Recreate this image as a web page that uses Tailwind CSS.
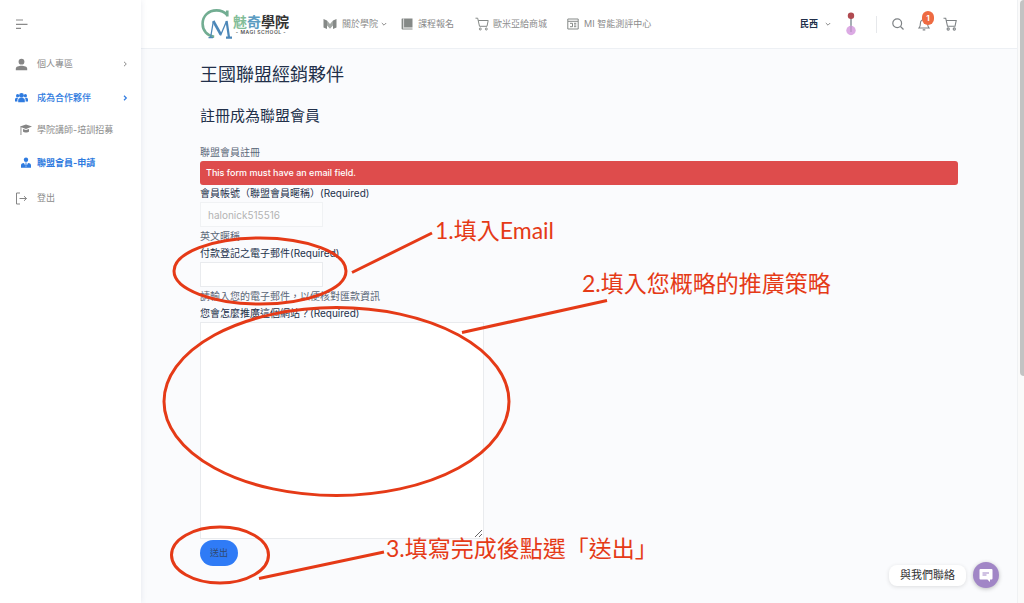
<!DOCTYPE html>
<html lang="zh-Hant">
<head>
<meta charset="utf-8">
<title>王國聯盟經銷夥伴</title>
<script src="https://cdn.jsdelivr.net/npm/@tailwindcss/browser@4"></script>
</head>
<body class="relative flex min-h-screen overflow-hidden bg-[#fafbfd] font-[Inter,'Noto_Sans_CJK_TC',sans-serif] text-[10px] text-[#5a6778]">

<!-- Sidebar -->
<aside class="z-10 w-[141px] shrink-0 bg-white shadow-[0_0_6px_rgba(40,60,110,0.10)]">
  <button type="button" aria-label="選單" class="mt-[17px] ml-[15px] block">
    <svg class="size-[14px]" viewBox="0 0 14 14" fill="none" stroke="#8a8a8a" stroke-width="1.2"><path d="M1 3h7M1 7.3h11.5M1 11.3h5"/></svg>
  </button>
  <nav class="mt-[16px] text-[9px] leading-[14px] text-[#8b8b8b]">
    <a href="#" class="flex h-[34px] items-center pr-[13px] pl-[15px]">
      <svg class="mr-[9px] size-[13px]" viewBox="0 0 13 13" fill="#858585"><circle cx="6.5" cy="3.7" r="2.9"/><path d="M.8 12.3v-1.6c0-2 3-2.9 5.7-2.9s5.7.9 5.7 2.9v1.6z"/></svg>
      <span class="flex-1">個人專區</span>
      <svg class="size-[6px]" viewBox="0 0 6 6" fill="none" stroke="#8b8b8b"><path d="M2 .8 4.3 3 2 5.2"/></svg>
    </a>
    <a href="#" class="flex h-[33px] items-center pr-[13px] pl-[15px] font-medium text-[#2f7be0]">
      <svg class="mr-[9px] h-[13px] w-[13px]" viewBox="0 0 13 13" fill="#2f7be0"><circle cx="6.5" cy="4.4" r="2.4"/><circle cx="2.6" cy="4.7" r="1.6"/><circle cx="10.4" cy="4.7" r="1.6"/><path d="M3.2 11.2V9.200c0-1.400 1-2.100 2-2.100h2.600c1 0 2 .7 2 2.100v2zM0 10.600V8.500C0 7.300.8 6.700 1.700 6.700h1.600c-.6.600-.9 1.300-.9 2.200v1.700zM13 10.600V8.500c0-1.200-.8-1.800-1.700-1.800H9.700c.6.600.9 1.300.9 2.200v1.700z"/></svg>
      <span class="flex-1">成為合作夥伴</span>
      <svg class="size-[6px]" viewBox="0 0 6 6" fill="none" stroke="#2f7be0" stroke-width="1.2"><path d="M2 .8 4.3 3 2 5.2"/></svg>
    </a>
    <a href="#" class="flex h-[32px] items-center pl-[20px]">
      <svg class="mr-[5px] h-[12px] w-[12px]" viewBox="0 0 12 12" fill="#858585"><path d="M0 2.6 6 .4l6 2.200L6 5 1.400 3.300V11H.5V2.900z"/><path d="M3 4.900 6 6.100l3-1.200v2.500C8 8.900 4 8.900 3 7.400z"/></svg>
      <span class="whitespace-nowrap">學院講師-培訓招募</span>
    </a>
    <a href="#" class="flex h-[34px] items-center pl-[20px] font-bold text-[#2f7be0]">
      <svg class="mr-[5px] h-[12px] w-[12px]" viewBox="0 0 12 12" fill="#2f7be0"><circle cx="6" cy="2.7" r="2.2"/><path d="M1 10.800V8.300c0-1.600 1.500-2.400 3-2.400l2 4.300 2-4.300c1.500 0 3 .8 3 2.400v2.500z"/><path d="M5.300 5.600h1.400l-.3 1.100.5 2L6 10l-.9-1.300.5-2z"/></svg>
      <span class="whitespace-nowrap">聯盟會員-申請</span>
    </a>
    <a href="#" class="flex h-[36px] items-center pl-[15px]">
      <svg class="mr-[9px] size-[13px]" viewBox="0 0 13 13" fill="none" stroke="#858585"><path d="M5 1H1.500v11H5M4.500 6.500h7M9 4.200l2.500 2.300L9 8.800"/></svg>
      <span>登出</span>
    </a>
  </nav>
</aside>

<div class="flex min-w-0 flex-1 flex-col">
  <!-- Top bar -->
  <header class="flex h-[49px] items-center border-b border-[#edf0f4] bg-white px-[59px] text-[9px] text-[#8b8b8b]">
    <a href="#" class="flex items-center" aria-label="魅奇學院">
      <svg class="h-[32px] w-[32px]" viewBox="0 0 32 32" fill="none"><path d="M27.300 8.500V2.500M27 7C24.200 3.700 20.500 2.400 16.500 2.400 8.500 2.400 2.600 8 2.600 15.800c0 7 4.900 12.300 11.600 12.900" stroke="#72ad92" stroke-width="2.600"/><path d="M8.500 29.600h4.500M10.600 29.500 13.300 13.500" stroke="#4c87b8" stroke-width="1.300"/><path d="M13.300 13 20.800 26.500" stroke="#4c87b8" stroke-width="2.600"/><path d="M20.500 27.500 26.600 13" stroke="#4c87b8" stroke-width="1.300"/><path d="M26.600 13 29 29.500M26 29.600h6" stroke="#4c87b8" stroke-width="2.200"/></svg>
      <span class="ml-[1px] flex flex-col items-center">
        <span class="text-[14px] leading-[17px] font-bold text-[#333]"><span class="text-[#83bd98]">魅</span><span class="text-[#5c9cc2]">奇</span>學院</span>
        <span class="text-[5px] leading-[5px] font-semibold tracking-widest text-[#555]">- MAGI SCHOOL -</span>
      </span>
    </a>
    <nav class="ml-[34px] flex items-center whitespace-nowrap">
      <a href="#" class="flex items-center">
        <svg class="mr-[5px] h-[12px] w-[14px]" viewBox="0 0 14 12"><path d="M.5 1 4 2.500V11L.5 9.500zM13.500 1 10 2.500V11l3.500-1.500z" fill="#858987"/><path d="M4 2.500 7 6l3-3.500v5L7 10.800 4 7.500z" fill="#a3a8a5"/></svg>
        關於學院
        <svg class="ml-[3px] size-[6px]" viewBox="0 0 6 6" fill="none" stroke="#8b8b8b"><path d="M.8 2 3 4.200 5.200 2"/></svg>
      </a>
      <a href="#" class="ml-[14px] flex items-center">
        <svg class="mr-[5px] size-[12px]" viewBox="0 0 12 12"><path d="M1 .5h10.500v9H2v1h9.500v1H2A1.200 1.200 0 0 1 .6 10V1z" fill="#858987"/><path d="M2.600.5v9" stroke="#fff" stroke-width=".7"/></svg>
        課程報名
      </a>
      <a href="#" class="ml-[21px] flex items-center">
        <svg class="mr-[4px] h-[14px] w-[14px]" viewBox="0 0 14 14" fill="none" stroke="#858987"><path d="M.5 1.200h2.200L4.500 9.300h7.500l1.200-5.800H3.300"/><circle cx="5.300" cy="12" r="1"/><circle cx="11.300" cy="12" r="1"/></svg>
        歐米亞給商城
      </a>
      <a href="#" class="ml-[20px] flex items-center">
        <svg class="mr-[5px] size-[12px]" viewBox="0 0 12 12" fill="none" stroke="#858987"><path d="M.8 1h10.400v10H.8zM1 3.300h10M3 5.300h2.500v3.400H3M7 5.300h2.300M7 7h2.300M7 8.700h2.300"/></svg>
        MI 智能測評中心
      </a>
    </nav>
    <div class="ml-auto flex items-center pr-px">
      <button type="button" class="flex items-center font-bold text-[#22304a]">民西
        <svg class="ml-[7px] size-[6px]" viewBox="0 0 6 6" fill="none" stroke="#8b8b8b"><path d="M.8 2 3 4.200 5.200 2"/></svg>
      </button>
      <svg class="ml-[14px] h-[24px] w-[12px]" viewBox="0 0 12 24"><path d="M6 5v10" stroke="#87939b" stroke-width="1.500"/><circle cx="6" cy="3.800" r="3.200" fill="#b04a50"/><circle cx="6" cy="18.500" r="4.700" fill="#dcaae4"/><path d="M6 14v6" stroke="#a98bb6"/></svg>
      <span class="ml-[19px] h-[17px] w-px bg-[#e6e8eb]"></span>
      <button type="button" aria-label="搜尋" class="ml-[15px]"><svg class="size-[12px]" viewBox="0 0 12 12" fill="none" stroke="#7e8285" stroke-width="1.200"><circle cx="5.200" cy="5.200" r="4.400"/><path d="m8.500 8.500 3 3"/></svg></button>
      <button type="button" aria-label="通知" class="relative ml-[14px]">
        <svg class="h-[13px] w-[12px]" viewBox="0 0 12 13" fill="none" stroke="#7e8285" stroke-width="1.100"><path d="M1 10h10C9.600 8.800 9.600 7.700 9.600 5.200a3.600 3.600 0 0 0-7.200 0C2.400 7.700 2.400 8.800 1 10zM4.700 11.900h2.600"/></svg>
        <span class="absolute -top-[7px] left-[4px] flex h-[14px] w-[12px] items-center justify-center rounded-full bg-[#ee6b42] text-[8px] font-bold text-white">1</span>
      </button>
      <button type="button" aria-label="購物車" class="ml-[13px]"><svg class="size-[14px]" viewBox="0 0 14 14" fill="none" stroke="#7e8285" stroke-width="1.100"><path d="M.5 1.200h2.200L4.500 9.300h7.500l1.200-5.800H3.300"/><circle cx="5.200" cy="12" r="1.100"/><circle cx="11.300" cy="12" r="1.100"/></svg></button>
    </div>
  </header>

  <main class="px-[59px] pt-[13px]">
    <h1 class="text-[18px] leading-[26px] text-[#22304a]">王國聯盟經銷夥伴</h1>
    <h2 class="mt-4 text-[15px] leading-[24px] text-[#22304a]">註冊成為聯盟會員</h2>
    <p class="mt-[15px] leading-[18px]">聯盟會員註冊</p>
    <div role="alert" class="rounded-[3px] bg-[#de4c4c] px-[6px] text-[9px] leading-[24px] font-medium text-white">This form must have an email field.</div>
    <form class="flex flex-col items-start">
      <label for="account" class="leading-[17px] text-[#22304a]">會員帳號（聯盟會員暱稱）(Required)</label>
      <input id="account" type="text" value="halonick515516" disabled class="h-[25px] w-[123px] border border-[#f0f2f4] bg-[#fcfdfe] px-[7px] text-[10px] text-[#b3b3b3]">
      <p class="leading-[18px]">英文暱稱</p>
      <label for="email" class="leading-[17px] text-[#22304a]">付款登記之電子郵件(Required)</label>
      <input id="email" type="text" class="h-[25px] w-[123px] border border-[#e9ebee] bg-white px-[7px]">
      <p class="leading-[18px]">請輸入您的電子郵件，以便核對匯款資訊</p>
      <label for="plan" class="leading-[17px] text-[#22304a]">您會怎麼推廣這個網站？(Required)</label>
      <textarea id="plan" class="h-[217px] w-[284px] border border-[#e9ebee] bg-white"></textarea>
      <button type="button" class="mt-px h-[26px] rounded-full bg-[#2f7bf6] px-[10px] text-[9px] text-[#31496f]">送出</button>
    </form>
  </main>
</div>

<!-- Page scrollbar -->
<div class="z-10 w-[7px] shrink-0 border-l border-[#eff1f3] bg-[#fafafa] pl-[2px]">
  <div class="h-[376px] rounded-l-full bg-[#c3c3c3]"></div>
</div>

<!-- Chat launcher -->
<div class="absolute right-[25px] bottom-[15px] z-20 flex items-center gap-[7px]">
  <a href="#" class="rounded-[8px] bg-white px-[11px] text-[11px] leading-[21px] text-[#333] shadow-[0_1px_4px_rgba(0,0,0,0.12)]">與我們聯絡</a>
  <button type="button" aria-label="聊天" class="flex size-[26px] items-center justify-center rounded-full bg-[#a186c6] shadow-[0_1px_4px_rgba(0,0,0,0.25)]">
    <svg class="size-[14px]" viewBox="0 0 14 14"><path d="M1.500 1h11a1 1 0 0 1 1 1v8.500a1 1 0 0 1-1 1H11V14l-2.600-2.500H1.500a1 1 0 0 1-1-1V2a1 1 0 0 1 1-1z" fill="#fff"/><path d="M3.500 5h6.500M3.500 7h4" stroke="#a186c6"/></svg>
  </button>
</div>

<!-- Hand-drawn annotations over the page -->
<svg class="pointer-events-none absolute top-0 left-0 z-30 h-[603px] w-[1024px]" viewBox="0 0 1024 603" fill="none" stroke="#e53a17" stroke-width="3">
  <ellipse cx="260" cy="271" rx="86" ry="33"/>
  <ellipse cx="336.500" cy="401.500" rx="172.500" ry="94"/>
  <ellipse cx="220" cy="555" rx="48.500" ry="28"/>
  <path d="M352 272.500 432 233M462 332.500 607 300.500M259 578.500 384 552"/>
</svg>
<div class="pointer-events-none absolute top-0 left-0 z-30 font-[Lato,'Noto_Sans_CJK_TC',sans-serif] text-[23px] leading-[30px] whitespace-nowrap text-[#e53a17]">
  <p class="absolute top-[215px] left-[435px]">1.填入Email</p>
  <p class="absolute top-[268px] left-[582px]">2.填入您概略的推廣策略</p>
  <p class="absolute top-[533px] left-[386px]">3.填寫完成後點選「送出」</p>
</div>
</body>
</html>
